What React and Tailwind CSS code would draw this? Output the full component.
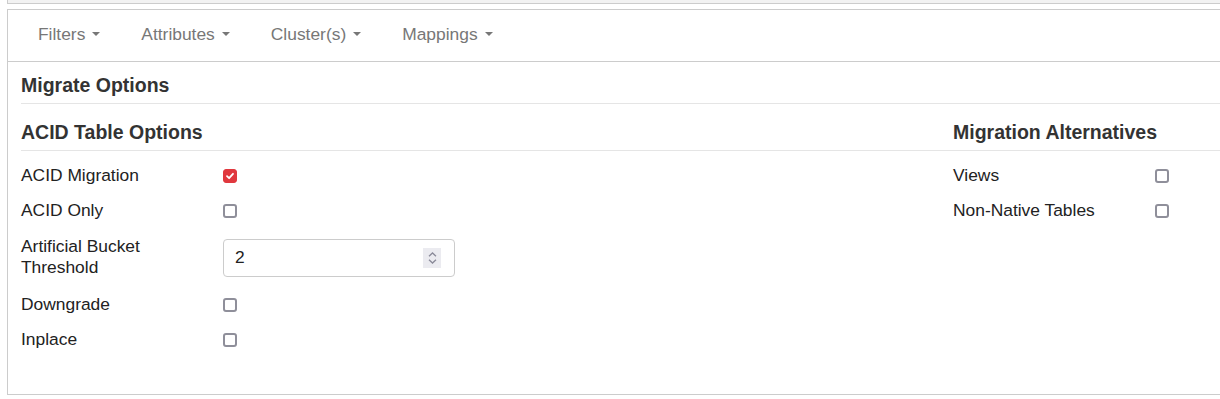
import React, { useState } from 'react';

const font = { fontFamily: '"Liberation Sans", Arial, sans-serif' };

function Caret() {
  return <span className="ml-[7px] inline-block w-0 h-0 border-l-[4px] border-r-[4px] border-t-[4px] border-l-transparent border-r-transparent border-t-[#777] align-middle" />;
}

function Check({ checked, onChange }) {
  return (
    <button
      type="button"
      onClick={onChange}
      className={
        'w-[14px] h-[14px] rounded-[3px] flex items-center justify-center ' +
        (checked ? 'bg-[#e0383e] border border-[#e0383e]' : 'bg-white border-2 border-[#8f8f9a]')
      }
    >
      {checked && (
        <svg width="10" height="10" viewBox="0 0 10 10">
          <path d="M2 5.2 L4.1 7.2 L8 2.8" fill="none" stroke="white" strokeWidth="1.8" strokeLinecap="round" strokeLinejoin="round" />
        </svg>
      )}
    </button>
  );
}

function Row({ label, children }) {
  return (
    <div className="flex items-center h-[35px]">
      <div className="w-[202px] text-[17.4px] leading-[21px] text-[#222]">{label}</div>
      <div className="flex items-center">{children}</div>
    </div>
  );
}

export default function App() {
  const [opts, setOpts] = useState({
    acidMigration: true,
    acidOnly: false,
    downgrade: false,
    inplace: false,
    views: false,
    nonNative: false,
  });
  const [threshold, setThreshold] = useState('2');
  const toggle = k => setOpts({ ...opts, [k]: !opts[k] });

  const nav = ['Filters', 'Attributes', 'Cluster(s)', 'Mappings'];

  return (
    <div className="w-[1220px] h-[399px] bg-white overflow-hidden" style={font}>
      <div className="ml-[7px] h-[4px] bg-[#f2f2f2] border-l border-b border-[#ccc]" />
      <div className="ml-[7px] mt-[5px] h-[386px] border-l border-t border-b border-[#ccc]">
        <div className="h-[52px] border-b border-[#ccc] flex items-center pl-[15px] pb-[2px]">
          {nav.map(n => (
            <a key={n} className="px-[15px] mr-[11px] text-[17.4px] text-[#777] flex items-center cursor-pointer">
              {n}
              <Caret />
            </a>
          ))}
        </div>
        <div className="pl-[13px]">
          <div className="h-[42px] border-b border-[#e5e5e5] flex items-end pb-[7px]">
            <h2 className="text-[19.5px] font-bold text-[#333] leading-[22px]">Migrate Options</h2>
          </div>
          <div className="h-[47px] border-b border-[#e5e5e5] flex items-end pb-[7px]">
            <h3 className="w-[932px] text-[19.5px] font-bold text-[#333] leading-[22px]">ACID Table Options</h3>
            <h3 className="text-[19.5px] font-bold text-[#333] leading-[22px]">Migration Alternatives</h3>
          </div>
          <div className="flex pt-[7px]">
            <div className="w-[932px]">
              <Row label="ACID Migration">
                <Check checked={opts.acidMigration} onChange={() => toggle('acidMigration')} />
              </Row>
              <Row label="ACID Only">
                <Check checked={opts.acidOnly} onChange={() => toggle('acidOnly')} />
              </Row>
              <div className="flex items-center h-[59px]">
                <div className="w-[202px] text-[17.4px] leading-[21px] text-[#222] -mt-[2px]">
                  Artificial Bucket<br />Threshold
                </div>
                <div className="w-[232px] h-[38px] border border-[#ccc] rounded-[4px] flex items-center pl-[11px] pr-[13px]">
                  <input
                    value={threshold}
                    onChange={e => setThreshold(e.target.value)}
                    className="flex-1 min-w-0 outline-none text-[17.4px] text-[#222] bg-transparent"
                  />
                  <div className="w-[18px] h-[20px] bg-[#ebebf0] flex flex-col items-center justify-center gap-[2px]">
                    <svg width="9" height="5" viewBox="0 0 9 5"><path d="M1 4.2 L4.5 1 L8 4.2" fill="none" stroke="#8a8a99" strokeWidth="1.3" /></svg>
                    <svg width="9" height="5" viewBox="0 0 9 5"><path d="M1 0.8 L4.5 4 L8 0.8" fill="none" stroke="#8a8a99" strokeWidth="1.3" /></svg>
                  </div>
                </div>
              </div>
              <Row label="Downgrade">
                <Check checked={opts.downgrade} onChange={() => toggle('downgrade')} />
              </Row>
              <Row label="Inplace">
                <Check checked={opts.inplace} onChange={() => toggle('inplace')} />
              </Row>
            </div>
            <div className="flex-1">
              <Row label="Views">
                <Check checked={opts.views} onChange={() => toggle('views')} />
              </Row>
              <Row label="Non-Native Tables">
                <Check checked={opts.nonNative} onChange={() => toggle('nonNative')} />
              </Row>
            </div>
          </div>
        </div>
      </div>
    </div>
  );
}
